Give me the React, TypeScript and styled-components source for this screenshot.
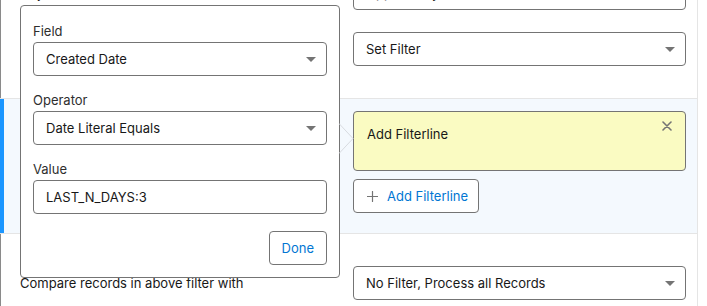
import React from "react";
import styled, { createGlobalStyle } from "styled-components";

const GlobalStyle = createGlobalStyle`
  html, body { margin: 0; padding: 0; background: #fff; }
  body {
    font-family: Inter, "Noto Sans", "Liberation Sans", sans-serif;
    font-size: 13px;
    color: #181818;
  }
  * { box-sizing: border-box; }
`;

const Viewport = styled.div`
  position: relative;
  width: 707px;
  height: 306px;
  overflow: hidden;
  background: #fff;
`;

const Panel = styled.div`
  width: 698px;
  margin-top: -24px;
  border-right: 1px solid #e5e5e5;
`;

const Section = styled.section<{ $active?: boolean; $pad: string }>`
  display: grid;
  grid-template-columns: 1fr 333px;
  column-gap: 12px;
  row-gap: 22px;
  align-items: center;
  padding: ${(p) => p.$pad};
  background: ${(p) => (p.$active ? "#f4f9fe" : "#fff")};
  box-shadow: ${(p) => (p.$active ? "inset 4px 0 0 #1b96ff" : "inset 1px 0 0 #8a8a8a")};
  border-top: ${(p) => (p.$active ? "1px solid #e5e5e5" : "none")};
  border-bottom: ${(p) => (p.$active ? "1px solid #e5e5e5" : "none")};
`;

const RowLabel = styled.span`
  font-size: 13px;
  line-height: 18px;
  color: #181818;
  white-space: nowrap;
`;

const Stack = styled.div`
  display: flex;
  flex-direction: column;
  align-items: flex-start;
  gap: 8px;
  grid-column: 2;
`;

const SelectBox = styled.div`
  display: flex;
  align-items: center;
  justify-content: space-between;
  width: 100%;
  height: 34px;
  padding: 0 10px 0 12px;
  border: 1px solid #747474;
  border-radius: 4px;
  background: #fff;
  font-size: 13px;
  line-height: 18px;
  color: #181818;
  white-space: nowrap;
`;

const TextInput = styled.div`
  display: flex;
  align-items: center;
  width: 100%;
  height: 34px;
  padding: 0 12px;
  border: 1px solid #747474;
  border-radius: 4px;
  background: #fff;
  font-size: 13px;
  color: #181818;
`;

const Arrow = () => (
  <svg width="10" height="5" viewBox="0 0 10 5" aria-hidden>
    <path d="M0 0 L10 0 L5 5 Z" fill="#747474" />
  </svg>
);

const Select = ({ value }: { value: string }) => (
  <SelectBox>
    <span>{value}</span>
    <Arrow />
  </SelectBox>
);

const Notice = styled.div`
  display: flex;
  justify-content: space-between;
  align-items: flex-start;
  width: 100%;
  height: 60px;
  padding: 13px 13px;
  background: #fafbc2;
  border: 1px solid #747474;
  border-radius: 4px;
  font-size: 13px;
  line-height: 18px;
  color: #181818;
`;

const CloseButton = styled.button`
  display: flex;
  padding: 0;
  margin-top: -4px;
  border: none;
  background: none;
  cursor: pointer;
`;

const NeutralButton = styled.button<{ $icon?: boolean }>`
  display: inline-flex;
  align-items: center;
  justify-content: center;
  gap: 9px;
  height: 34px;
  padding: ${(p) => (p.$icon ? "0 10px 0 13px" : "0 12px")};
  border: 1px solid #747474;
  border-radius: 4px;
  background: #fff;
  font-family: inherit;
  font-size: 13px;
  color: #0176d3;
  cursor: pointer;
`;

const Popover = styled.div`
  position: absolute;
  left: 20px;
  top: 5px;
  width: 320px;
  height: 273px;
  padding: 16px 12px 12px;
  background: #fff;
  border: 1px solid #747474;
  border-radius: 4px;
  display: flex;
  flex-direction: column;
  gap: 15px;
`;

const Nub = styled.svg`
  position: absolute;
  left: 100%;
  top: 117px;
`;

const FieldGroup = styled.div`
  display: flex;
  flex-direction: column;
`;

const FieldLabel = styled.label`
  font-size: 13px;
  line-height: 18px;
  color: #2e2e2e;
  margin-bottom: 2px;
`;

const Footer = styled.div`
  display: flex;
  justify-content: flex-end;
  margin-top: 2px;
`;

export default function App() {
  return (
    <>
      <GlobalStyle />
      <Viewport>
        <Panel>
          <Section $pad="0 11px 32px 20px">
            <RowLabel>Object</RowLabel>
            <Select value="Opportunity" />
            <RowLabel />
            <Select value="Set Filter" />
          </Section>
          <Section $active $pad="12px 11px 20px 20px">
            <Stack>
              <Notice>
                <span>Add Filterline</span>
                <CloseButton aria-label="Close">
                  <svg width="10" height="10" viewBox="0 0 10 10">
                    <path d="M1 1 L9 9 M9 1 L1 9" stroke="#747474" strokeWidth="1.6" strokeLinecap="round" />
                  </svg>
                </CloseButton>
              </Notice>
              <NeutralButton $icon>
                <svg width="11" height="11" viewBox="0 0 11 11">
                  <path d="M5.5 0.5 V10.5 M0.5 5.5 H10.5" stroke="#747474" strokeWidth="1.2" strokeLinecap="round" />
                </svg>
                <span>Add Filterline</span>
              </NeutralButton>
            </Stack>
          </Section>
          <Section $pad="32px 11px 20px 20px">
            <RowLabel>Compare records in above filter with</RowLabel>
            <Select value="No Filter, Process all Records" />
          </Section>
        </Panel>

        <Popover>
          <FieldGroup>
            <FieldLabel>Field</FieldLabel>
            <Select value="Created Date" />
          </FieldGroup>
          <FieldGroup>
            <FieldLabel>Operator</FieldLabel>
            <Select value="Date Literal Equals" />
          </FieldGroup>
          <FieldGroup>
            <FieldLabel>Value</FieldLabel>
            <TextInput>LAST_N_DAYS:3</TextInput>
          </FieldGroup>
          <Footer>
            <NeutralButton>Done</NeutralButton>
          </Footer>
          <Nub width="15" height="31" viewBox="0 0 15 31" aria-hidden>
            <polyline points="0,0.5 14,15.5 0,30.5" fill="none" stroke="#d8dbe0" strokeWidth="1" />
          </Nub>
        </Popover>
      </Viewport>
    </>
  );
}
